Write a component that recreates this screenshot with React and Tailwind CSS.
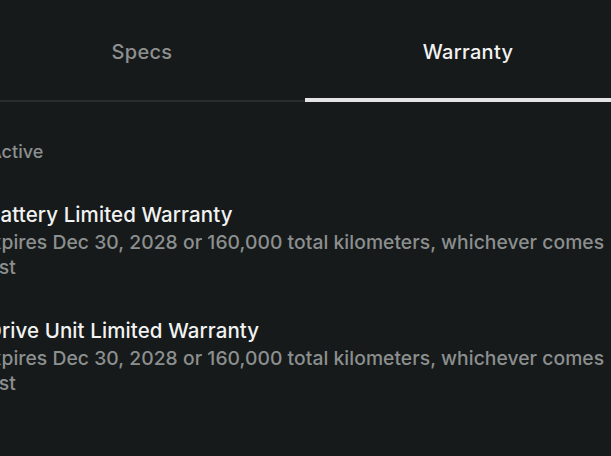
import React, { useState } from 'react';

const warranties = [
  {
    title: 'Battery Limited Warranty',
    detail: 'Expires Dec 30, 2028 or 160,000 total kilometers, whichever comes first',
  },
  {
    title: 'Drive Unit Limited Warranty',
    detail: 'Expires Dec 30, 2028 or 160,000 total kilometers, whichever comes first',
  },
];

const App = () => {
  const [tab, setTab] = useState('warranty');

  const tabClass = (active) =>
    `relative flex items-center justify-center pt-[3px] text-[20px] font-medium tracking-[0.3px] ${
      active ? 'text-[#f2f2f2]' : 'text-[#8e9090]'
    }`;

  return (
    <div className="w-[611px] h-[456px] overflow-hidden bg-[#161a1a] font-['Inter',sans-serif]">
      <div className="-ml-[21px] w-[652px]">
        <div className="grid grid-cols-2 h-[102px] border-b-2 border-[#2a2d2e]">
          <button className={tabClass(tab === 'specs')} onClick={() => setTab('specs')}>
            Specs
            {tab === 'specs' && <span className="absolute left-0 right-0 -bottom-[2px] h-[4px] bg-[#e3e4e4]" />}
          </button>
          <button className={tabClass(tab === 'warranty')} onClick={() => setTab('warranty')}>
            Warranty
            {tab === 'warranty' && <span className="absolute left-0 right-0 -bottom-[2px] h-[4px] bg-[#e3e4e4]" />}
          </button>
        </div>

        <div className="pl-[8px] pt-[37px]">
          <p className="ml-[2px] text-[18px] leading-[25px] font-medium text-[#8c8f8f]">Active</p>

          <div className="mt-[38px] flex flex-col gap-[38px]">
            {warranties.map((w) => (
              <div key={w.title}>
                <h3 className="text-[20.5px] leading-[26px] font-medium tracking-[0.1px] text-[#f2f2f2]">{w.title}</h3>
                <p className="-ml-[8px] mt-[2px] text-[19.3px] leading-[25px] font-medium tracking-[0.05px] text-[#8c8f8f]">
                  {w.detail}
                </p>
              </div>
            ))}
          </div>
        </div>
      </div>
    </div>
  );
};

export default App;
